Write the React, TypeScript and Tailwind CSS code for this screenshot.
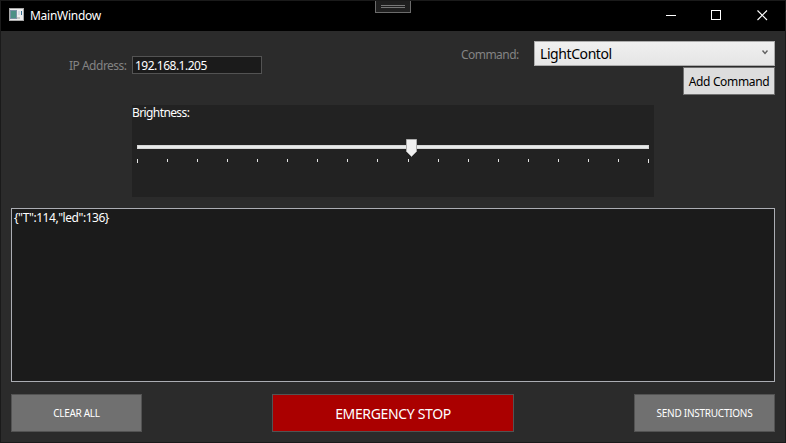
import type { ReactNode } from "react";

const TICKS = Array.from({ length: 18 }, (_, i) => Math.round(i * 30.06));

function ActionButton({ className, children }: { className: string; children: ReactNode }) {
  return (
    <button className={`flex h-[38px] items-center justify-center border border-[#535353] whitespace-nowrap text-white ${className}`}>
      {children}
    </button>
  );
}

function TitleBar() {
  return (
    <header className="flex h-[30px] bg-black pl-2 text-white">
      <svg className="mt-[7px] h-[13px] w-[15px]" viewBox="0 0 15 13" shapeRendering="crispEdges">
        <rect width="15" height="13" fill="#a8a8a8" />
        <rect x="1" y="1" width="13" height="11" fill="#eeeeee" />
        <rect x="1" y="2" width="7" height="9" fill="#7c91a5" />
        <rect x="2" y="3" width="5" height="7" fill="#4d9186" />
        <rect x="9" y="3" width="2" height="4" fill="#d5dce4" />
        <rect x="12" y="3" width="1" height="4" fill="#356f92" />
        <rect x="8" y="9" width="3" height="2" fill="#c5c5c5" />
      </svg>
      <span className="ml-[6px] mt-[7px] h-4 text-[12px] leading-4 tracking-[-0.27px]">MainWindow</span>
      <svg className="ml-auto mr-[17px] mt-[9px] h-[11px] w-[102px]" viewBox="0 0 102 11" fill="none" stroke="white">
        <path d="M0 5.5h10" />
        <rect x="45.5" y=".5" width="9" height="9" />
        <path d="m91.5.5 9.5 9.5m0-9.5-9.5 9.5" strokeWidth="1.1" />
      </svg>
    </header>
  );
}

function BrightnessSlider() {
  return (
    <section className="ml-[131px] mt-[10px] h-[92px] w-[522px] bg-[#222222] text-white">
      <div className="h-4 text-[12px] leading-4 tracking-[-0.6px]">Brightness:</div>
      <svg className="ml-[5px] mt-[18px] h-[26px] w-[512px]" viewBox="0 0 512 26">
        <rect x=".5" y="6.5" width="511" height="3" fill="#e7eaea" stroke="#d6d6d6" />
        {TICKS.map((x, i) => (
          <rect key={x} x={x} y="20" width="1" height={i === 0 || i === 17 ? 4 : 3} fill="#e5e5e5" />
        ))}
        <path d="M269.5.5h10v12l-5 5-5-5z" fill="#f0f0f0" stroke="#acacac" />
      </svg>
    </section>
  );
}

export default function App() {
  return (
    <div className="relative h-[443px] w-[786px] overflow-hidden border border-[#1a1a1a] bg-[#2b2b2b] font-['Noto_Sans','Open_Sans',sans-serif]">
      <TitleBar />
      <div className="absolute left-[374px] top-[-1px] flex h-[13px] w-9 flex-col items-center gap-px border border-[#6b6b6b] bg-[#1f1f1f] pt-1">
        <i className="h-px w-6 bg-[#777777]" />
        <i className="h-px w-6 bg-[#777777]" />
      </div>
      <main>
        <div className="flex h-16">
          <div className="ml-[68px] mt-[25px] flex h-[18px]">
            <label className="w-[63px] whitespace-nowrap text-[12px] leading-[19px] tracking-[-0.5px] text-[#838383]">IP Address:</label>
            <div className="w-[130px] border border-[#535353] bg-[#1b1b1b] pl-[2px] text-[12px] leading-[17px] tracking-[-0.5px] text-white">192.168.1.205</div>
          </div>
          <label className="ml-[199px] mt-4 h-4 w-[73px] text-[12px] leading-4 tracking-[-0.55px] text-[#838383]">Command:</label>
          <div className="mt-[10px] flex w-[241px] flex-col items-end">
            <div className="flex h-[25px] w-full items-center border border-[#acacac] bg-linear-to-b from-[#f0f0f0] to-[#e5e5e5] pl-[5px] text-[14px] text-black">
              <span className="tracking-[-0.42px]">LightContol</span>
              <svg className="ml-auto mr-[6px] mb-[2px] h-[5px] w-[6px]" viewBox="0 0 6 5" fill="none" stroke="#606060" strokeWidth="1.4">
                <path d="m.5.5 2.5 3 2.5-3" />
              </svg>
            </div>
            <button className="mt-px flex h-7 w-[92px] items-center justify-center whitespace-nowrap border border-[#707070] bg-[#dddddd] pt-px text-[12px] tracking-[-0.35px] text-black">Add Command</button>
          </div>
        </div>
        <BrightnessSlider />
        <div className="ml-[10px] mt-[11px] h-[174px] w-[764px] border border-[#abadb3] bg-[#1b1b1b] pl-[2px] pt-px text-[12px] leading-4 tracking-[-0.46px] text-white">{'{"T":114,"led":136}'}</div>
        <div className="ml-[10px] mt-3 flex w-[764px]">
          <ActionButton className="w-[131px] bg-[#707070] text-[10px] tracking-[-0.3px]">CLEAR ALL</ActionButton>
          <ActionButton className="ml-[130px] w-[242px] bg-[#aa0000] text-[14px] tracking-[-0.35px]">EMERGENCY STOP</ActionButton>
          <ActionButton className="ml-auto w-[141px] bg-[#707070] text-[10px] tracking-[-0.26px]">SEND INSTRUCTIONS</ActionButton>
        </div>
      </main>
    </div>
  );
}
